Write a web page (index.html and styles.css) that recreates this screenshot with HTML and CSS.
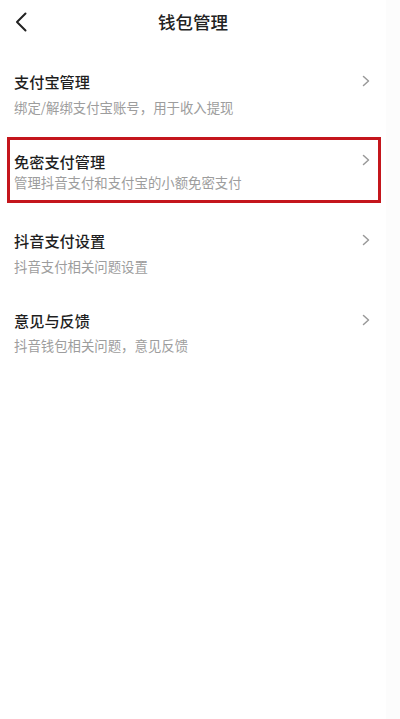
FILE: index.html
```html
<!DOCTYPE html>
<html lang="zh-CN">
<head>
    <meta charset="UTF-8">
    <meta name="viewport" content="width=device-width, initial-scale=1.0">
    <title>钱包管理</title>
    <link rel="stylesheet" href="styles.css">
</head>
<body>
    <div class="page">
        <header class="topbar">
            <span class="back">
                <svg width="12" height="20" viewBox="0 0 12 20">
                    <path d="M10.5 1.5 L2 10 L10.5 18.5" fill="none" stroke="#222" stroke-width="2" stroke-linecap="round" stroke-linejoin="round"/>
                </svg>
            </span>
            <h1>钱包管理</h1>
        </header>

        <div class="menu">
            <div class="item">
                <div class="text">
                    <div class="name">支付宝管理</div>
                    <div class="desc">绑定/解绑支付宝账号，用于收入提现</div>
                </div>
                <svg class="arrow" width="8" height="12" viewBox="0 0 8 12">
                    <path d="M1.5 1.5 L6.5 6 L1.5 10.5" fill="none" stroke="#999" stroke-width="1.5" stroke-linecap="round" stroke-linejoin="round"/>
                </svg>
            </div>

            <!-- marked item -->
            <div class="item marked">
                <div class="text">
                    <div class="name">免密支付管理</div>
                    <div class="desc">管理抖音支付和支付宝的小额免密支付</div>
                </div>
                <svg class="arrow" width="8" height="12" viewBox="0 0 8 12">
                    <path d="M1.5 1.5 L6.5 6 L1.5 10.5" fill="none" stroke="#999" stroke-width="1.5" stroke-linecap="round" stroke-linejoin="round"/>
                </svg>
            </div>

            <div class="item">
                <div class="text">
                    <div class="name">抖音支付设置</div>
                    <div class="desc">抖音支付相关问题设置</div>
                </div>
                <svg class="arrow" width="8" height="12" viewBox="0 0 8 12">
                    <path d="M1.5 1.5 L6.5 6 L1.5 10.5" fill="none" stroke="#999" stroke-width="1.5" stroke-linecap="round" stroke-linejoin="round"/>
                </svg>
            </div>

            <div class="item">
                <div class="text">
                    <div class="name">意见与反馈</div>
                    <div class="desc">抖音钱包相关问题，意见反馈</div>
                </div>
                <svg class="arrow" width="8" height="12" viewBox="0 0 8 12">
                    <path d="M1.5 1.5 L6.5 6 L1.5 10.5" fill="none" stroke="#999" stroke-width="1.5" stroke-linecap="round" stroke-linejoin="round"/>
                </svg>
            </div>
        </div>
    </div>
</body>
</html>
```

FILE: styles.css
```css
body {
    margin: 0;
    padding: 0;
    background-color: #fcfcfc;
    font-family: "Noto Sans CJK SC", "Noto Sans", sans-serif;
}
.page {
    width: 386px;
    min-height: 100vh;
    background-color: #fff;
}
.topbar {
    position: relative;
    height: 44px;
    display: flex;
    align-items: center;
    justify-content: center;
}
.topbar h1 {
    margin: 0;
    font-size: 17.5px;
    font-weight: 500;
    color: #222;
    line-height: 24px;
}
.back {
    position: absolute;
    left: 15px;
    top: 12px;
    display: flex;
}
.menu {
    padding-top: 9.5px;
}
.item {
    position: relative;
    box-sizing: border-box;
    height: 79.5px;
    padding: 16.75px 16px 0 14px;
    display: flex;
    justify-content: space-between;
}
.name {
    font-size: 15.2px;
    font-weight: 500;
    line-height: 22px;
    color: #1f1f1f;
}
.desc {
    margin-top: 5.5px;
    font-size: 13.4px;
    line-height: 18px;
    color: #9d9d9d;
}
.arrow {
    margin-top: 5px;
}
.marked {
    padding-top: 18.75px;
}
.marked .name {
    line-height: 18px;
}
.marked .desc {
    margin-top: 5px;
    line-height: 14px;
}
.marked .arrow {
    margin-top: 2px;
}
.marked::after {
    content: "";
    position: absolute;
    left: 7px;
    top: 4.25px;
    width: 374px;
    height: 66px;
    box-sizing: border-box;
    border: 3.5px solid #c4161c;
}
```
